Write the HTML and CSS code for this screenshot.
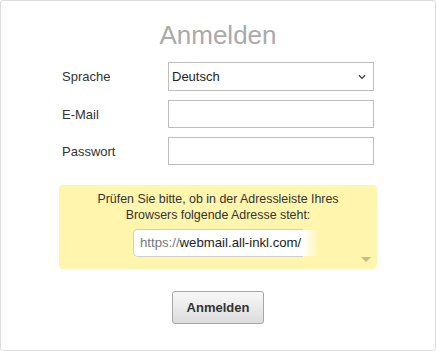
FILE: index.html
```html
<!DOCTYPE html>
<html lang="de">
<head>
<meta charset="utf-8">
<title>Anmelden</title>
<link rel="stylesheet" href="styles.css">
</head>
<body>
<div class="panel">
  <h1 class="title">Anmelden</h1>
  <form class="form">
    <label class="label" for="lang">Sprache</label>
    <div class="select-wrap">
      <select class="select" id="lang"><option>Deutsch</option></select>
      <svg class="chevron" width="8" height="6" viewBox="0 0 8 6" aria-hidden="true"><polyline points="1,1.2 4,4.4 7,1.2" fill="none" stroke="#3a3a3a" stroke-width="1.3"/></svg>
    </div>
    <label class="label" for="mail">E-Mail</label>
    <input class="input" id="mail" type="text">
    <label class="label" for="pass">Passwort</label>
    <input class="input" id="pass" type="password">
  </form>
  <div class="notice">
    <p class="notice-text">Prüfen Sie bitte, ob in der Adressleiste Ihres<br>Browsers folgende Adresse steht:</p>
    <div class="url">
      <div class="url-field"><span class="url-scheme">https://</span><span class="url-host">webmail.all-inkl.com/</span></div>
      <div class="url-fade"></div>
    </div>
    <span class="notice-toggle"></span>
  </div>
  <div class="actions">
    <button class="button" type="button">Anmelden</button>
  </div>
</div>
</body>
</html>
```
FILE: styles.css
```css
html, body {
  margin: 0;
  padding: 0;
  background: #fff;
}
body {
  font-family: "Liberation Sans", Arial, sans-serif;
  color: #333;
}
.panel {
  box-sizing: border-box;
  width: 436px;
  height: 351px;
  border: 1px solid #dcdcdc;
  border-radius: 3px;
  padding-top: 19px;
}
.title {
  margin: 0;
  font-size: 26px;
  line-height: 30px;
  font-weight: normal;
  color: #aaa;
  text-align: center;
}
.form {
  display: grid;
  grid-template-columns: 106px 206px;
  row-gap: 9px;
  align-items: center;
  margin: 12px 0 0 61px;
}
.label {
  font-size: 13px;
  color: #333;
}
.select-wrap {
  position: relative;
  width: 206px;
  height: 29px;
}
.chevron {
  position: absolute;
  right: 8px;
  top: 12px;
  pointer-events: none;
}
.select, .input {
  box-sizing: border-box;
  width: 206px;
  margin: 0;
  border: 1px solid #bdbdbd;
  border-radius: 0;
  background: #fff;
  font-family: "Liberation Sans", Arial, sans-serif;
  font-size: 13px;
  color: #222;
  outline: none;
}
.select {
  display: block;
  height: 29px;
  padding: 0 0 0 3px;
  appearance: none;
  -webkit-appearance: none;
}
.input {
  height: 28px;
  padding: 0 4px;
}
.notice {
  position: relative;
  box-sizing: border-box;
  width: 318px;
  height: 84px;
  margin: 20px 0 0 58px;
  padding-top: 6px;
  background: #fff5ad;
  border-radius: 4px;
}
.notice-text {
  margin: 0;
  font-size: 12.4px;
  line-height: 16px;
  color: #333;
  text-align: center;
}
.url {
  display: flex;
  align-items: center;
  margin: 6px 0 0 74px;
}
.url-field {
  box-sizing: border-box;
  width: 170px;
  height: 28px;
  padding-left: 6px;
  border: 1px solid #cfcfcf;
  border-right: none;
  border-radius: 5px 0 0 5px;
  background: #fff;
  font-size: 13.2px;
  line-height: 26px;
  white-space: nowrap;
  overflow: hidden;
}
.url-scheme {
  color: #777;
}
.url-host {
  color: #222;
}
.url-fade {
  width: 16px;
  height: 26px;
  background: linear-gradient(to right, #fff, rgba(255, 255, 255, 0));
}
.notice-toggle {
  position: absolute;
  right: 6px;
  bottom: 7px;
  width: 0;
  height: 0;
  border-left: 5px solid transparent;
  border-right: 5px solid transparent;
  border-top: 5px solid #c2ba94;
}
.actions {
  display: flex;
  justify-content: center;
  margin-top: 22px;
}
.button {
  box-sizing: border-box;
  width: 92px;
  height: 33px;
  margin: 0;
  padding: 0;
  border: 1px solid #a6a6a6;
  border-radius: 3px;
  background: linear-gradient(#f8f8f8, #dcdcdc);
  font-family: "Liberation Sans", Arial, sans-serif;
  font-size: 13px;
  font-weight: bold;
  color: #333;
}
```
